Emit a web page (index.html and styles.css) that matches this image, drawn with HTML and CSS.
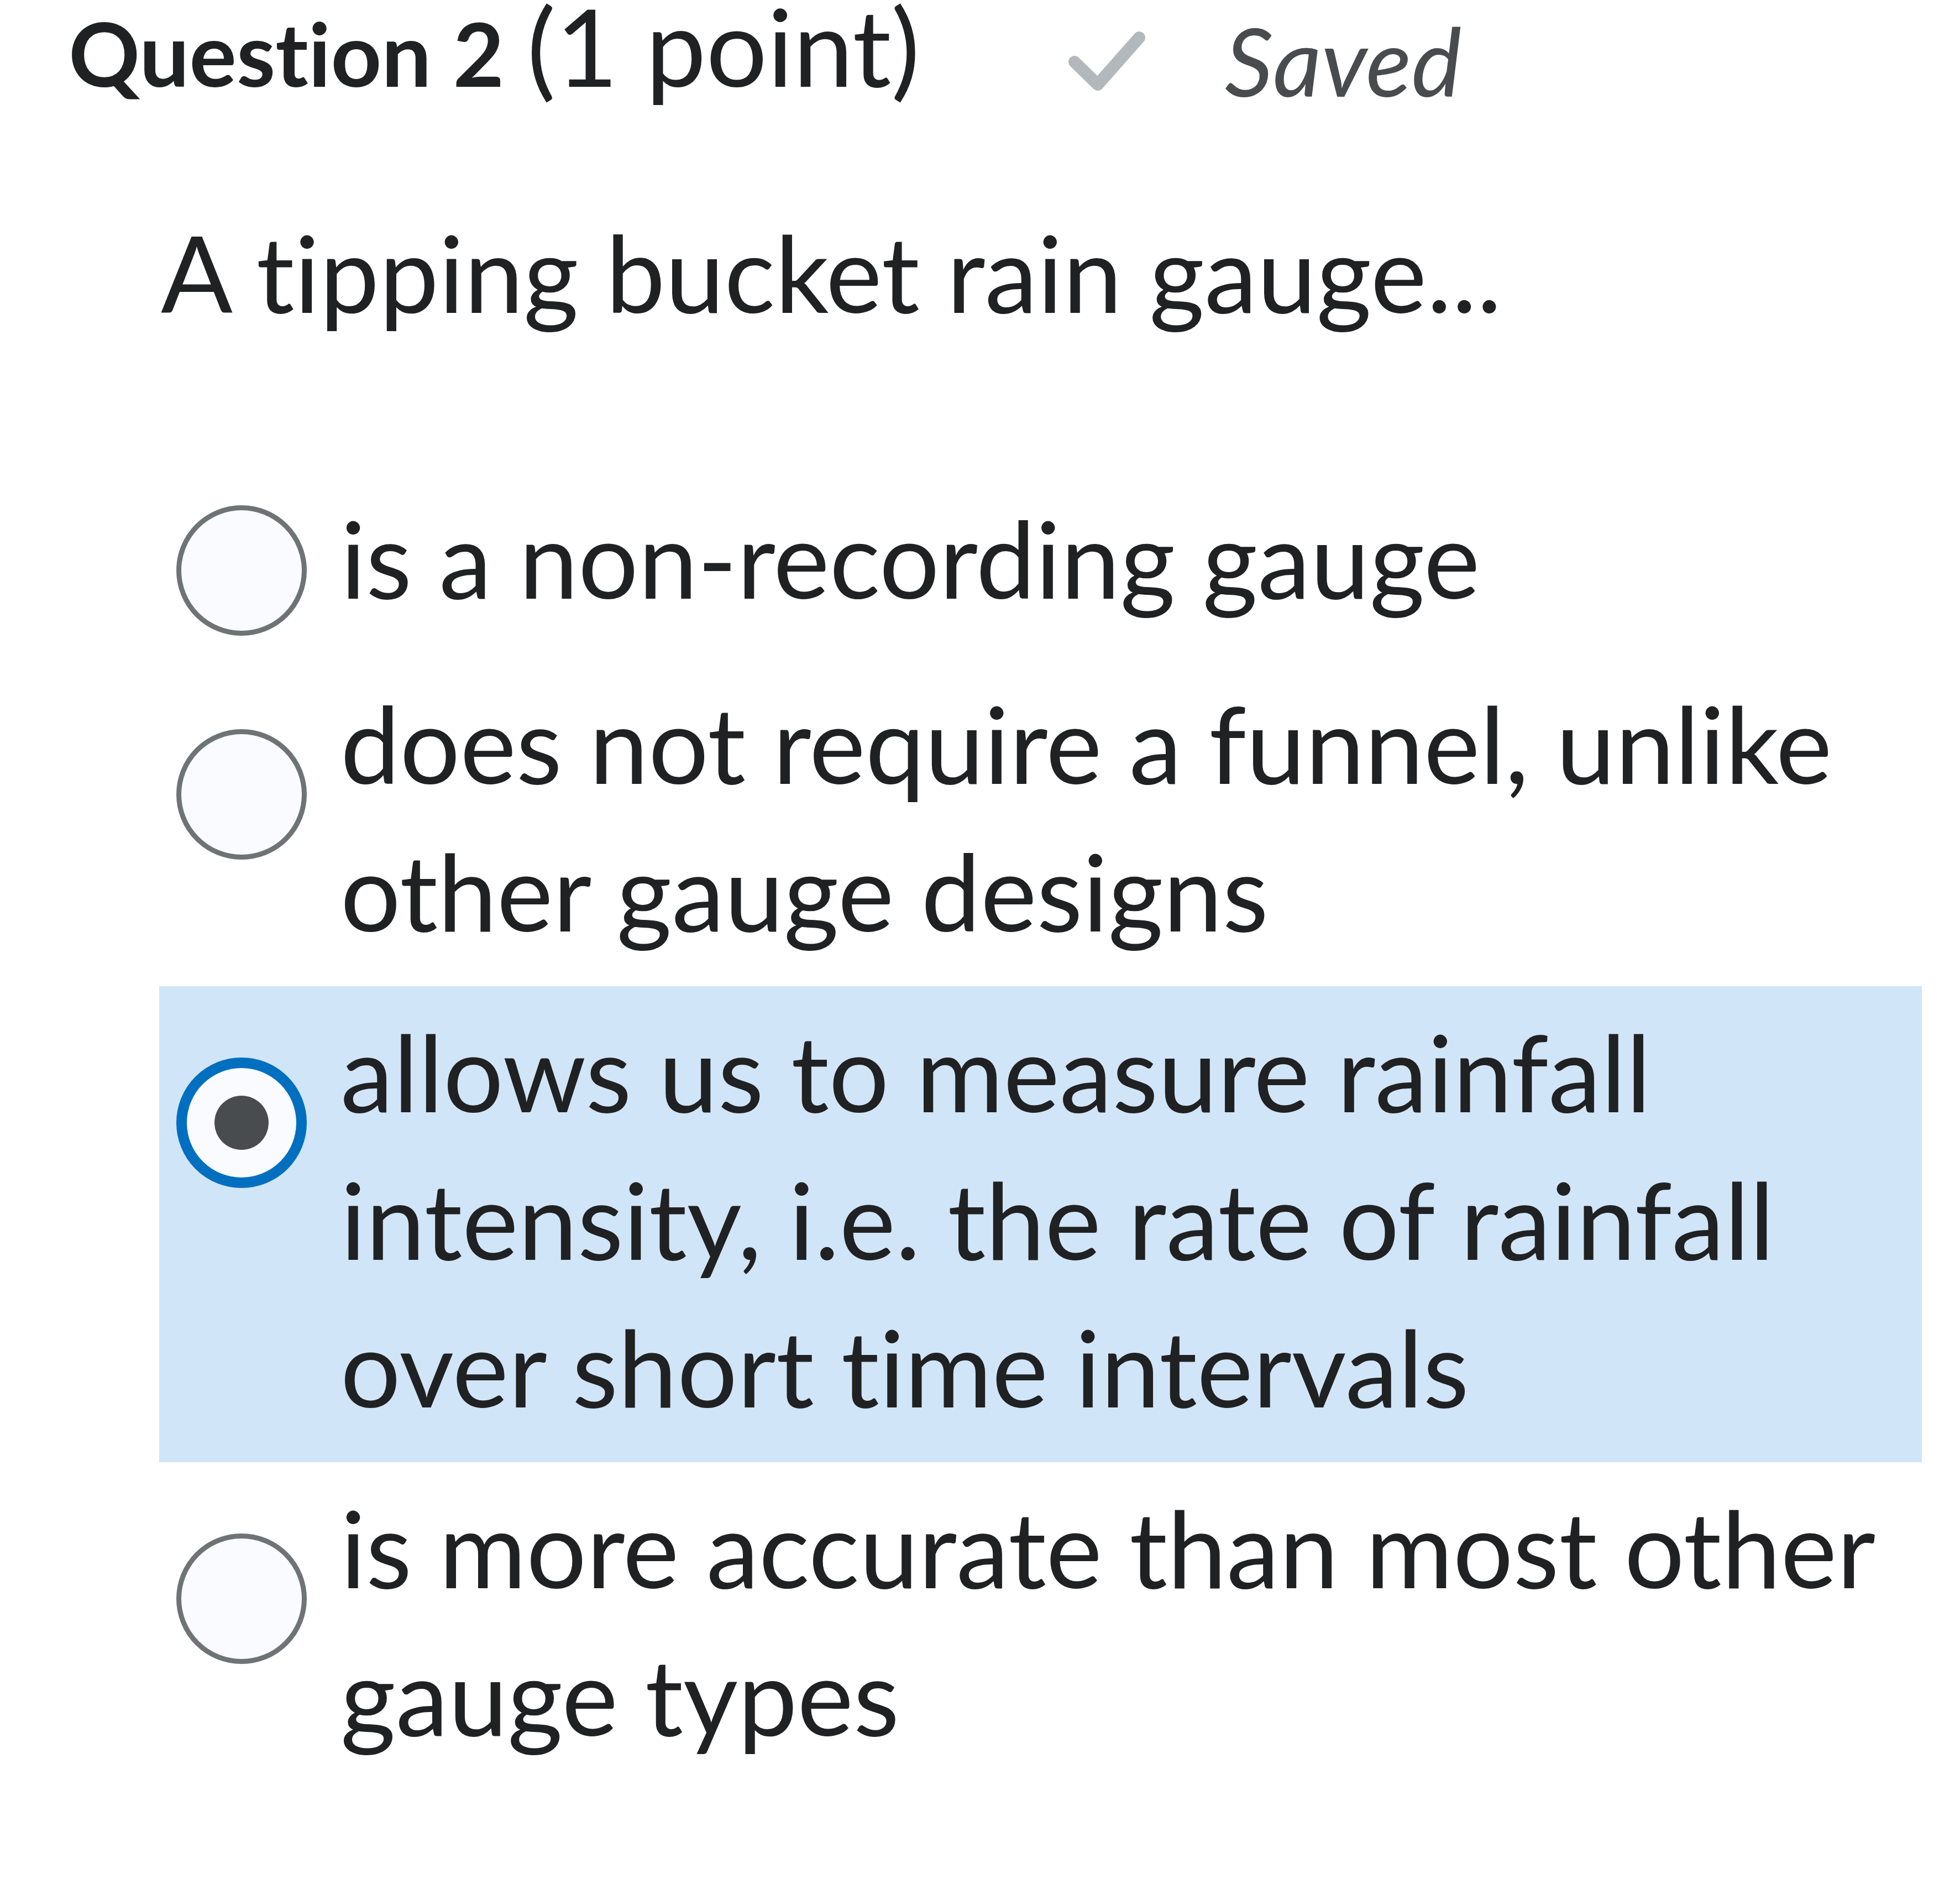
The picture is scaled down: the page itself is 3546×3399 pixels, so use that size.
FILE: index.html
```html
<!DOCTYPE html>
<html lang="en">
<head>
<meta charset="utf-8">
<title>Question 2</title>
<link rel="stylesheet" href="styles.css">
</head>
<body>
<div class="header">
  <h2 class="title"><span class="title-strong">Question 2</span> <span class="points">(1 point)</span></h2>
  <svg class="check" viewBox="0 0 148 120" width="148" height="120" aria-hidden="true">
    <polyline points="18,60 60,101 135,16" fill="none" stroke="#b3b8bd" stroke-width="22" stroke-linecap="round" stroke-linejoin="round"/>
  </svg>
  <span class="saved">Saved</span>
</div>
<p class="question">A tipping bucket rain gauge...</p>
<div class="options">
  <label class="option option-single">
    <span class="radio"></span>
    <span class="option-text">is a non-recording gauge</span>
  </label>
  <label class="option">
    <span class="radio"></span>
    <span class="option-text">does not require a funnel, unlike other gauge designs</span>
  </label>
  <label class="option option-selected">
    <span class="radio radio-checked"><span class="dot"></span></span>
    <span class="option-text">allows us to measure rainfall intensity, i.e. the rate of rainfall over short time intervals</span>
  </label>
  <label class="option">
    <span class="radio"></span>
    <span class="option-text">is more accurate than most other gauge types</span>
  </label>
</div>
</body>
</html>
```
FILE: styles.css
```css
html, body {
  margin: 0;
  padding: 0;
  background: #ffffff;
}
body {
  font-family: Lato, "Open Sans", sans-serif;
  color: #202122;
  font-variant-ligatures: no-common-ligatures;
  font-feature-settings: "liga" 0, "clig" 0;
}
.header {
  display: flex;
  align-items: flex-start;
  padding: 12px 0 0 124px;
}
.title {
  flex: 0 0 1802px;
  margin: 0;
  font-size: 160px;
  font-weight: 400;
  line-height: 140px;
}
.title-strong {
  font-weight: 700;
}
.points {
  font-size: 195px;
}
.check {
  flex: 0 0 148px;
  margin-top: 40px;
}
.saved {
  margin-left: 142px;
  margin-top: 11px;
  font-size: 172px;
  line-height: 1;
  font-style: italic;
  color: #494c4e;
}
.question {
  margin: 163px 0 0 0;
  padding-left: 291px;
  font-size: 192px;
  line-height: 267px;
}
.options {
  margin: 230px 0 0 288px;
  width: 3189px;
}
.option {
  display: flex;
  align-items: flex-start;
  padding: 20px 37px 40px 31px;
  font-size: 192px;
  line-height: 267px;
}
.option-selected {
  background: #d1e5f8;
}
.radio {
  flex: 0 0 236px;
  width: 236px;
  height: 236px;
  box-sizing: border-box;
  margin-top: 109px;
  border: 9px solid #6e7376;
  border-radius: 50%;
  background: #f9fbff;
  display: flex;
  align-items: center;
  justify-content: center;
}
.option-single .radio {
  margin-top: 39px;
}
.radio-checked {
  border: 19px solid #006fbf;
}
.dot {
  width: 98px;
  height: 98px;
  border-radius: 50%;
  background: #494c4e;
}
.option-text {
  margin-left: 61px;
}
```
